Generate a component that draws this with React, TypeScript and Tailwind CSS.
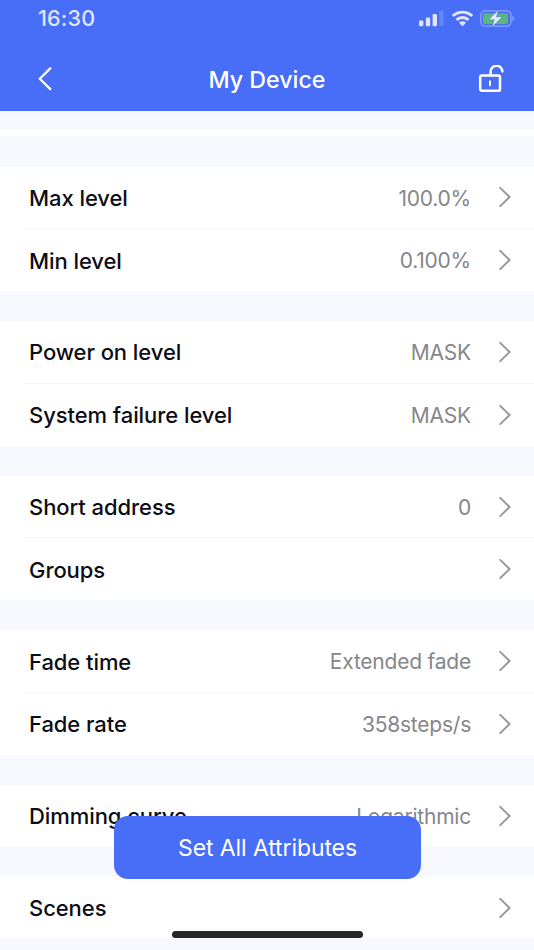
const groups = [
  [
    { label: "Max level", value: "100.0%" },
    { label: "Min level", value: "0.100%" },
  ],
  [
    { label: "Power on level", value: "MASK" },
    { label: "System failure level", value: "MASK" },
  ],
  [
    { label: "Short address", value: "0" },
    { label: "Groups", value: "" },
  ],
  [
    { label: "Fade time", value: "Extended fade" },
    { label: "Fade rate", value: "358steps/s" },
  ],
  [{ label: "Dimming curve", value: "Logarithmic" }],
  [{ label: "Scenes", value: "" }],
];

const StatusIcons = () => (
  <div className="flex items-center gap-[7.5px] text-[#e1e6fe]">
    <svg className="w-[25px] h-[17px]" viewBox="0 0 25 17" fill="currentColor">
      <rect x="0" y="10.5" width="4.4" height="5.7" rx="1.2" />
      <rect x="6.8" y="7.5" width="4.4" height="8.7" rx="1.2" />
      <rect x="13.6" y="4" width="4.4" height="12.2" rx="1.2" />
      <rect x="20.2" y="0.6" width="4.4" height="15.6" rx="1.2" opacity="0.2" />
    </svg>
    <svg
      className="w-[21px] h-[17px] overflow-visible"
      viewBox="0 0 21 17"
      fill="none"
      stroke="currentColor"
      strokeWidth="2.9"
    >
      <path d="M.8 6a14 14 0 0 1 19.4 0" />
      <path d="M4.5 9.9a8.6 8.6 0 0 1 12 0" />
      <path
        d="M10.5 16.2 7 12.8a5 5 0 0 1 7 0Z"
        fill="currentColor"
        stroke="none"
      />
    </svg>
    <svg className="w-[35px] h-[17px]" viewBox="0 0 35 17" fill="none">
      <rect
        x="0.8"
        y="0.9"
        width="30.2"
        height="15.2"
        rx="4.2"
        stroke="#8fa4fc"
        strokeWidth="1.3"
      />
      <path d="M32.5 5.8v5.4c2.3-.9 2.3-4.5 0-5.4Z" fill="#8fa4fc" />
      <rect x="3" y="3.2" width="25.2" height="10.8" rx="2" fill="#5ab67e" />
      <path
        d="M18.4 0 8.8 9.7h5.6L12.2 17l9.9-10.1h-5.8Z"
        fill="#e8ecff"
        stroke="#4f80d8"
        strokeWidth="0.5"
      />
    </svg>
  </div>
);

const Row = ({ label, value }: { label: string; value: string }) => (
  <div className="h-[61.8px] pl-[29px] pr-[23px] flex items-center">
    <span className="pt-[2px] text-[22px] font-medium tracking-[-0.07px] text-[#0d0d16]">
      {label}
    </span>
    <span className="pt-[2px] ml-auto text-[21px] tracking-[-0.22px] text-[#86868b]">
      {value}
    </span>
    <svg
      className="ml-[28px] w-[12px] h-[20px] overflow-visible"
      viewBox="0 0 12 20"
      fill="none"
      stroke="#98989b"
      strokeWidth="2"
      strokeLinecap="round"
      strokeLinejoin="round"
    >
      <path d="M1.2 .9 10.6 10l-9.4 9.1" />
    </svg>
  </div>
);

const App = () => {
  return (
    <div className="relative w-full h-[950px] overflow-hidden bg-[#f8f9fe] font-['Inter',sans-serif]">
      <header className="h-[110.5px] bg-[#486df6] text-white">
        <div className="h-[36px] pl-[38px] pr-[19px] flex items-center justify-between">
          <span className="text-[21.5px] font-medium tracking-[0.2px] text-[#e1e6fe]">
            16:30
          </span>
          <StatusIcons />
        </div>
        <div className="mt-[12px] h-[62px] pl-[38px] pr-[29px] grid grid-cols-[30px_1fr_39px] items-center">
          <svg
            className="w-[14px] h-[24px]"
            viewBox="0 0 14 24"
            fill="none"
            stroke="currentColor"
            strokeWidth="2.3"
            strokeLinecap="round"
            strokeLinejoin="round"
          >
            <path d="M12.3 1.4 1.8 11.8l10.5 10.3" />
          </svg>
          <h1 className="pt-[2px] text-center text-[23.2px] font-medium">
            My Device
          </h1>
          <svg
            className="ml-auto w-[27px] h-[28px]"
            viewBox="0 0 27 28"
            fill="none"
            stroke="currentColor"
            strokeWidth="2.5"
            strokeLinecap="round"
          >
            <rect x="2.2" y="10.6" width="19.8" height="15.2" rx="1.6" />
            <path d="M12.6 10.4V7a5.9 5.9 0 0 1 11.8-.6" />
            <path d="M12 16.2v4" strokeWidth="2" />
          </svg>
        </div>
      </header>

      <div className="mt-[19px] h-[6.5px] bg-white" />

      <main className="mt-[30.5px] flex flex-col gap-[30px]">
        {groups.map((rows) => (
          <section key={rows[0].label} className="bg-white">
            {rows.map((row, i) => (
              <div key={row.label}>
                {i > 0 && <div className="ml-[24px] h-px bg-[#f5f5f7]" />}
                <Row {...row} />
              </div>
            ))}
          </section>
        ))}
      </main>

      <button className="absolute left-[114px] top-[816px] w-[307px] h-[62.5px] pt-[2px] rounded-[14px] bg-[#486df6] text-white text-[23px] tracking-[-0.1px]">
        Set All Attributes
      </button>
      <div className="absolute left-[172px] top-[931px] w-[191px] h-[7px] rounded-full bg-[#272727]" />
    </div>
  );
};

export default App;
